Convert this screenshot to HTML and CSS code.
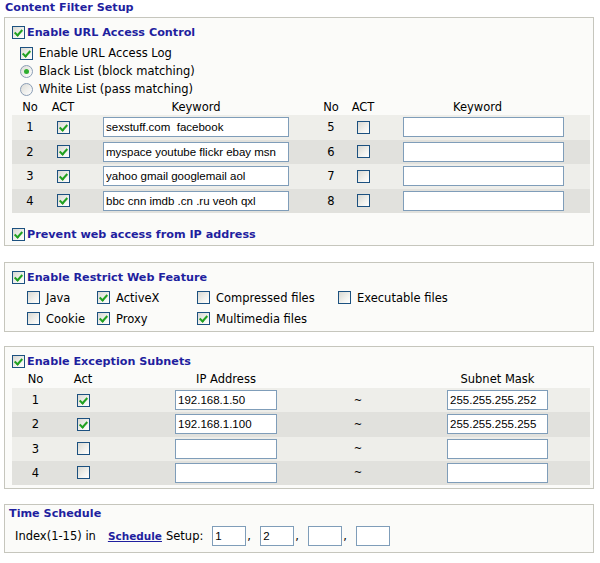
FILE: index.html
```html
<!DOCTYPE html>
<html>
<head>
<meta charset="utf-8">
<title>Content Filter Setup</title>
<link rel="stylesheet" href="styles.css">
</head>
<body>
<div class="page">
  <div class="title">Content Filter Setup</div>

  <div class="box box-url">
    <div class="head"><span class="cb on"></span><span class="head-text">Enable URL Access Control</span></div>
    <div class="opts">
      <div class="opt"><span class="cb on"></span><span>Enable URL Access Log</span></div>
      <div class="opt"><span class="rb on"></span><span>Black List (block matching)</span></div>
      <div class="opt"><span class="rb"></span><span>White List (pass matching)</span></div>
    </div>
    <table class="grid kw">
      <colgroup>
        <col class="c-no1"><col class="c-act1"><col class="c-kw1"><col class="c-no2"><col class="c-act2"><col class="c-kw2">
      </colgroup>
      <tr class="th">
        <td>No</td><td>ACT</td><td>Keyword</td><td>No</td><td>ACT</td><td class="kw2-h">Keyword</td>
      </tr>
      <tr class="odd">
        <td>1</td><td><span class="cb on"></span></td><td><input class="in in-kw1" value="sexstuff.com  facebook"></td>
        <td>5</td><td><span class="cb"></span></td><td class="kw2"><input class="in in-kw2" value=""></td>
      </tr>
      <tr class="even">
        <td>2</td><td><span class="cb on"></span></td><td><input class="in in-kw1" value="myspace youtube flickr ebay msn"></td>
        <td>6</td><td><span class="cb"></span></td><td class="kw2"><input class="in in-kw2" value=""></td>
      </tr>
      <tr class="odd">
        <td>3</td><td><span class="cb on"></span></td><td><input class="in in-kw1" value="yahoo gmail googlemail aol"></td>
        <td>7</td><td><span class="cb"></span></td><td class="kw2"><input class="in in-kw2" value=""></td>
      </tr>
      <tr class="even">
        <td>4</td><td><span class="cb on"></span></td><td><input class="in in-kw1" value="bbc cnn imdb .cn .ru veoh qxl"></td>
        <td>8</td><td><span class="cb"></span></td><td class="kw2"><input class="in in-kw2" value=""></td>
      </tr>
    </table>
    <div class="head prevent"><span class="cb on"></span><span class="head-text">Prevent web access from IP address</span></div>
  </div>

  <div class="box box-web">
    <div class="head"><span class="cb on"></span><span class="head-text">Enable Restrict Web Feature</span></div>
    <div class="feat">
      <div class="fitem"><span class="cb"></span><span>Java</span></div>
      <div class="fitem"><span class="cb on"></span><span>ActiveX</span></div>
      <div class="fitem"><span class="cb"></span><span>Compressed files</span></div>
      <div class="fitem"><span class="cb"></span><span>Executable files</span></div>
      <div class="fitem"><span class="cb"></span><span>Cookie</span></div>
      <div class="fitem"><span class="cb on"></span><span>Proxy</span></div>
      <div class="fitem"><span class="cb on"></span><span>Multimedia files</span></div>
      <div class="fitem"></div>
    </div>
  </div>

  <div class="box box-sub">
    <div class="head"><span class="cb on"></span><span class="head-text">Enable Exception Subnets</span></div>
    <table class="grid sub">
      <colgroup>
        <col class="s-no"><col class="s-act"><col class="s-ip"><col class="s-til"><col class="s-mask">
      </colgroup>
      <tr class="th">
        <td>No</td><td>Act</td><td>IP Address</td><td></td><td class="mask">Subnet Mask</td>
      </tr>
      <tr class="odd">
        <td>1</td><td><span class="cb on"></span></td><td><input class="in in-ip" value="192.168.1.50"></td><td class="til">~</td><td class="mask"><input class="in in-ip" value="255.255.255.252"></td>
      </tr>
      <tr class="even">
        <td>2</td><td><span class="cb on"></span></td><td><input class="in in-ip" value="192.168.1.100"></td><td class="til">~</td><td class="mask"><input class="in in-ip" value="255.255.255.255"></td>
      </tr>
      <tr class="odd">
        <td>3</td><td><span class="cb"></span></td><td><input class="in in-ip" value=""></td><td class="til">~</td><td class="mask"><input class="in in-ip" value=""></td>
      </tr>
      <tr class="even">
        <td>4</td><td><span class="cb"></span></td><td><input class="in in-ip" value=""></td><td class="til">~</td><td class="mask"><input class="in in-ip" value=""></td>
      </tr>
    </table>
  </div>

  <div class="box box-time">
    <div class="time-title">Time Schedule</div>
    <div class="time-row">
      <span class="idx-label">Index(1-15) in</span>
      <a class="link" href="#">Schedule</a>
      <span class="setup">Setup:</span>
      <input class="in in-idx" value="1"><span class="comma">,</span>
      <input class="in in-idx" value="2"><span class="comma">,</span>
      <input class="in in-idx" value=""><span class="comma">,</span>
      <input class="in in-idx" value="">
    </div>
  </div>
</div>
</body>
</html>
```

FILE: styles.css
```css
html, body {
  margin: 0;
  padding: 0;
  background: #ffffff;
}

body {
  font-family: "DejaVu Sans", Verdana, sans-serif;
  font-size: 11.5px;
  color: #000;
}

.page {
  width: 590px;
  padding: 1px 0 0 4px;
}

.title {
  font-weight: bold;
  font-size: 11.2px;
  color: #1f1f9f;
  line-height: 14px;
  height: 14px;
  padding-left: 1px;
  margin-bottom: 2px;
}

.box {
  border: 1px solid #c6c6bd;
  background: #fbfbf9;
  padding: 7px 3px 4px 7px;
}

.box-web { margin-top: 16px; padding-bottom: 2px; }
.box-sub { margin-top: 14px; padding-bottom: 3px; }
.box-time { margin-top: 15px; padding: 2px 3px 6px 3px; }

.head {
  display: flex;
  align-items: center;
  height: 14px;
  gap: 2px;
}

.head-text {
  font-weight: bold;
  color: #1f1f9f;
  font-size: 11.2px;
}

.prevent { margin-top: 14px; }

.opts {
  margin-top: 5px;
  padding-left: 8px;
}

.opt {
  display: flex;
  align-items: center;
  height: 18px;
  gap: 6px;
}

/* checkboxes and radios */
.cb {
  display: inline-block;
  position: relative;
  flex: none;
  box-sizing: border-box;
  width: 13px;
  height: 13px;
  border: 1px solid #1c5180;
  background: linear-gradient(135deg, #d8d8d2 0%, #f2f2ee 60%, #ffffff 100%);
  vertical-align: middle;
}

.cb.on::after {
  content: "";
  position: absolute;
  left: 3px;
  top: 1px;
  width: 3px;
  height: 6px;
  border: solid #21a121;
  border-width: 0 2px 2px 0;
  transform: rotate(42deg);
}

.rb {
  display: inline-block;
  position: relative;
  flex: none;
  box-sizing: border-box;
  width: 13px;
  height: 13px;
  border: 1px solid #8a9db5;
  border-radius: 50%;
  background: linear-gradient(135deg, #dcdcd6 0%, #ffffff 100%);
}

.rb.on::after {
  content: "";
  position: absolute;
  left: 3px;
  top: 3px;
  width: 5px;
  height: 5px;
  border-radius: 50%;
  background: #2fae2f;
}

/* tables */
.grid {
  border-collapse: collapse;
  border-spacing: 0;
  table-layout: fixed;
  width: 578px;
}

.grid td {
  padding: 0;
  text-align: center;
  vertical-align: middle;
}

.grid .cb { display: block; margin: 0 auto; }

.kw .th td { height: 17px; }
.kw .odd td, .kw .even td { height: 24.5px; }

.odd td { background: #eeeeea; }
.even td { background: #e1e1dd; }

.c-no1 { width: 36px; }
.c-act1 { width: 30px; }
.c-kw1 { width: 236px; }
.c-no2 { width: 34px; }
.c-act2 { width: 30px; }
.c-kw2 { width: 212px; }

.grid td.kw2 { padding: 0 26px 0 25px; }
.grid td.kw2-h { padding: 0 38px 0 25px; }

.in {
  box-sizing: border-box;
  height: 20px;
  border: 1px solid #7f9db9;
  background: #fff;
  font-family: "Liberation Sans", Arial, sans-serif;
  font-size: 11.5px;
  color: #000;
  padding: 0 2px;
  margin: 0;
  outline: none;
  display: block;
}

.in-kw1 { width: 186px; margin: 0 auto; }
.in-kw2 { width: 161px; }

/* restrict web feature */
.feat {
  margin: 3px 0 0 15px;
  display: grid;
  grid-template-columns: 70px 100px 141px auto;
  grid-auto-rows: 21px;
}

.fitem {
  display: flex;
  align-items: center;
  gap: 6px;
}

/* subnets */
.sub { margin-top: 2px; }
.sub .th td { height: 18px; }
.sub .odd td, .sub .even td { height: 24.25px; }

.s-no { width: 47px; }
.s-act { width: 48px; }
.s-ip { width: 238px; }
.s-til { width: 26px; }
.s-mask { width: 219px; }

.grid td.mask { padding: 0 42px 0 76px; }
.in-ip { width: 102px; margin: 0 auto; }
.mask .in-ip { width: 101px; }

.til { font-size: 10px; padding-top: 3px; }

/* time schedule */
.time-title {
  font-weight: bold;
  font-size: 11.2px;
  color: #1f1f9f;
  line-height: 14px;
  height: 14px;
  padding-left: 1px;
}

.time-row {
  margin-top: 5px;
  display: flex;
  align-items: center;
  height: 20px;
  padding-left: 7px;
}

.link {
  font-weight: bold;
  font-size: 10.5px;
  color: #1f1f9f;
  text-decoration: underline;
  margin: 0 4px 0 12px;
}

.setup { margin-right: 9px; }

.in-idx { width: 34px; }
.comma { width: 13px; padding-left: 1px; }
```
